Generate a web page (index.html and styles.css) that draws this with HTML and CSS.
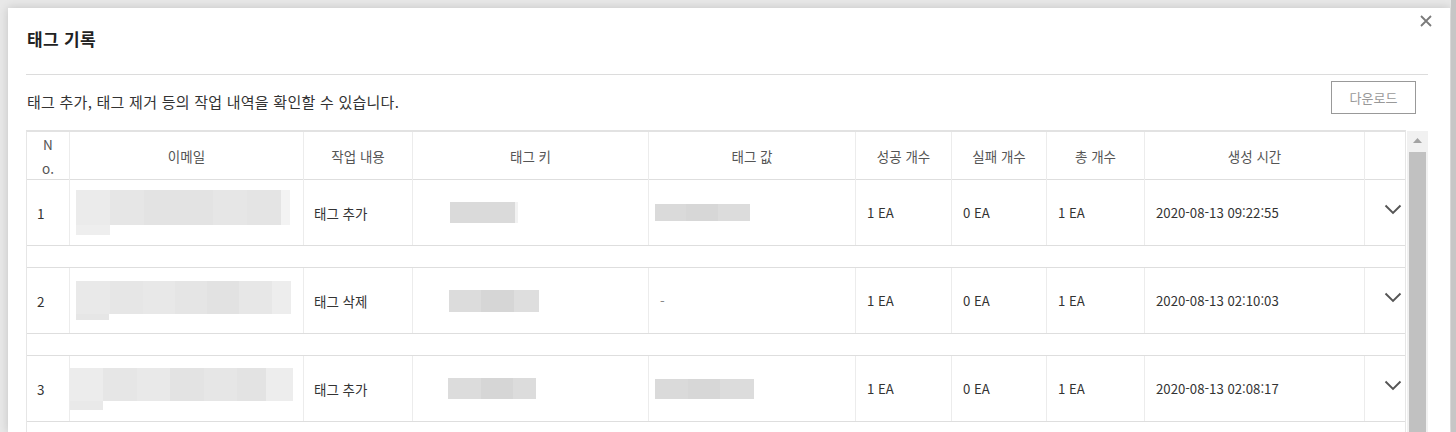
FILE: index.html
```html
<!DOCTYPE html>
<html lang="ko">
<head>
<meta charset="utf-8">
<title>태그 기록</title>
<link rel="stylesheet" href="styles.css">
</head>
<body>
<div class="backdrop">
  <div class="modal">
    <div class="modal-head">
      <h2 class="title">태그 기록</h2>
      <button class="close" aria-label="닫기">
        <svg width="12" height="12" viewBox="0 0 12 12"><path d="M1 1L11 11M11 1L1 11" stroke="#7a7a7a" stroke-width="1.8" fill="none"/></svg>
      </button>
    </div>
    <div class="toolbar">
      <p class="desc">태그 추가, 태그 제거 등의 작업 내역을 확인할 수 있습니다.</p>
      <button class="btn-download">다운로드</button>
    </div>
    <div class="table-area">
      <div class="tbl">
        <div class="row head">
          <div class="cell"><span class="no">No.</span></div>
          <div class="cell">이메일</div>
          <div class="cell">작업 내용</div>
          <div class="cell">태그 키</div>
          <div class="cell">태그 값</div>
          <div class="cell">성공 개수</div>
          <div class="cell">실패 개수</div>
          <div class="cell">총 개수</div>
          <div class="cell">생성 시간</div>
          <div class="cell"></div>
        </div>

        <div class="row body">
          <div class="cell">1</div>
          <div class="cell email e1"><div class="mask-main m1"></div><div class="mask-tail"></div></div>
          <div class="cell">태그 추가</div>
          <div class="cell key k1"><div class="mask-key w1"></div></div>
          <div class="cell val v1"><div class="mask-val"></div></div>
          <div class="cell num">1 EA</div>
          <div class="cell num">0 EA</div>
          <div class="cell num">1 EA</div>
          <div class="cell num">2020-08-13 09:22:55</div>
          <div class="cell toggle"><svg class="chev" width="18" height="11" viewBox="0 0 18 11"><path d="M1.5 1.5L9 9L16.5 1.5" stroke="#555" stroke-width="1.9" fill="none"/></svg></div>
        </div>
        <div class="row spacer"></div>

        <div class="row body">
          <div class="cell">2</div>
          <div class="cell email e2"><div class="mask-main m2"></div><div class="mask-tail t2"></div></div>
          <div class="cell">태그 삭제</div>
          <div class="cell key k2"><div class="mask-key w2"></div></div>
          <div class="cell dash">-</div>
          <div class="cell num">1 EA</div>
          <div class="cell num">0 EA</div>
          <div class="cell num">1 EA</div>
          <div class="cell num">2020-08-13 02:10:03</div>
          <div class="cell toggle"><svg class="chev" width="18" height="11" viewBox="0 0 18 11"><path d="M1.5 1.5L9 9L16.5 1.5" stroke="#555" stroke-width="1.9" fill="none"/></svg></div>
        </div>
        <div class="row spacer"></div>

        <div class="row body">
          <div class="cell">3</div>
          <div class="cell email e3"><div class="mask-main m3"></div><div class="mask-tail t3"></div></div>
          <div class="cell">태그 추가</div>
          <div class="cell key k3"><div class="mask-key w3"></div></div>
          <div class="cell val v3"><div class="mask-val wide"></div></div>
          <div class="cell num">1 EA</div>
          <div class="cell num">0 EA</div>
          <div class="cell num">1 EA</div>
          <div class="cell num">2020-08-13 02:08:17</div>
          <div class="cell toggle"><svg class="chev" width="18" height="11" viewBox="0 0 18 11"><path d="M1.5 1.5L9 9L16.5 1.5" stroke="#555" stroke-width="1.9" fill="none"/></svg></div>
        </div>
        <div class="row spacer"></div>
      </div>
      <div class="vscroll">
        <div class="vscroll-up"><svg width="9" height="5" viewBox="0 0 9 5"><path d="M0 5L4.5 0L9 5Z" fill="#a3a3a3"/></svg></div>
        <div class="vscroll-thumb"></div>
      </div>
    </div>
  </div>
</div>
<div class="page-scroll"></div>
</body>
</html>
```

FILE: styles.css
```css
html, body {
  margin: 0;
  height: 432px;
  overflow: hidden;
}
body {
  display: flex;
  background: #e8e8e8;
  font-family: "Noto Sans CJK KR", "Noto Sans", sans-serif;
  color: #333;
}
.backdrop {
  width: 1451px;
  box-sizing: border-box;
  padding: 8px 1px 0 8px;
  display: flex;
  flex-direction: column;
}
.page-scroll {
  width: 5px;
  background: #c6c6c6;
}
.modal {
  flex: 1;
  background: #fff;
  box-shadow: 0 0 9px rgba(0, 0, 0, 0.16);
  padding: 7px 22px 0 18px;
  overflow: hidden;
}
.modal-head {
  display: flex;
  justify-content: space-between;
  align-items: flex-start;
  height: 59px;
  border-bottom: 1px solid #dcdcdc;
}
.title {
  margin: 12px 0 0 1px;
  font-size: 17px;
  letter-spacing: 0.3px;
  line-height: 24px;
  font-weight: 700;
  color: #222;
}
.close {
  margin: 0 -4px 0 0;
  padding: 0;
  border: 0;
  background: none;
  width: 12px;
  height: 12px;
  display: flex;
}
.toolbar {
  display: flex;
  justify-content: space-between;
  align-items: flex-end;
  margin-top: 6px;
}
.desc {
  margin: 0 0 2px 1px;
  font-size: 15px;
  letter-spacing: 0.25px;
  line-height: 20px;
  color: #333;
}
.btn-download {
  width: 85px;
  height: 33px;
  margin-right: 12px;
  border: 1px solid #999;
  background: #fff;
  color: #999;
  font-family: inherit;
  font-size: 13px;
  padding: 0;
}
.table-area {
  display: flex;
  align-items: stretch;
  margin-top: 16px;
  height: 320px;
}
.tbl {
  width: 1380px;
  box-sizing: border-box;
  border-left: 1px solid #e6e6e6;
  border-right: 1px solid #e6e6e6;
  border-top: 2px solid #e2e2e2;
  align-self: flex-start;
}
.row {
  display: grid;
  grid-template-columns: 43px 234px 109px 236px 207px 96px 95px 98px 220px 40px;
  border-bottom: 1px solid #dedede;
  box-sizing: border-box;
}
.row.head { height: 48px; }
.row.body { height: 66px; }
.row.spacer { height: 22px; }
.cell {
  border-right: 1px solid #ececec;
  display: flex;
  align-items: center;
  font-size: 13.5px;
  color: #333;
  padding-left: 10px;
  box-sizing: border-box;
  min-width: 0;
  white-space: nowrap;
}
.cell.num {
  padding-left: 11px;
  font-size: 13.2px;
  font-feature-settings: "calt" 0;
}
.cell:last-child { border-right: 0; }
.head .cell {
  justify-content: center;
  padding-left: 0;
  color: #555;
  white-space: normal;
}
.no {
  width: 14px;
  word-break: break-all;
  line-height: 24px;
  text-align: center;
}
.email {
  flex-direction: column;
  align-items: flex-start;
  justify-content: center;
}
.e1 { padding-left: 6px; }
.e2 { padding-left: 6px; }
.e3 { padding-left: 0; }
.mask-main {
  width: 214px;
  height: 35px;
  background: linear-gradient(90deg, #ebebeb 0 16%, #e6e6e6 16% 32%, #e3e3e3 32% 64%, #e6e6e6 64% 80%, #e4e4e4 80% 96%, #f3f3f3 96%);
}
.m2 {
  width: 215px;
  height: 33px;
  background: linear-gradient(90deg, #e9e9e9 0 16%, #e6e6e6 16% 31%, #e8e8e8 31% 46%, #e5e5e5 46% 61%, #e2e2e2 61% 76%, #e7e7e7 76% 91%, #ededed 91%);
}
.m3 {
  width: 223px;
  height: 33px;
  background: linear-gradient(90deg, #ececec 0 15%, #e6e6e6 15% 30%, #e9e9e9 30% 45%, #e3e3e3 45% 60%, #e6e6e6 60% 75%, #e3e3e3 75% 88%, #ededed 88%);
}
.mask-tail {
  width: 34px;
  height: 10px;
  background: #eeeeee;
}
.t2 { width: 33px; height: 6px; background: #e6e6e6; }
.t3 { width: 33px; height: 9px; background: #e9e9e9; }
.key { padding-left: 37px; }
.k2 { padding-left: 36px; }
.k3 { padding-left: 35px; }
.mask-key {
  height: 21px;
  background: #dadada;
}
.w1 { width: 65px; box-shadow: 3px 0 0 #f2f2f2; }
.w2 { width: 90px; height: 22px; background: linear-gradient(90deg, #dcdcdc 0 36%, #d6d6d6 36% 72%, #dedede 72%); }
.w3 { width: 88px; height: 21px; background: linear-gradient(90deg, #dcdcdc 0 37%, #d6d6d6 37% 74%, #dcdcdc 74%); }
.val { padding-left: 6px; }
.mask-val {
  width: 95px;
  height: 17px;
  background: linear-gradient(90deg, #dadada 0 33%, #d7d7d7 33% 66%, #dcdcdc 66%);
}
.mask-val.wide { width: 99px; height: 20px; }
.dash { color: #888; padding-left: 11px; }
.toggle { padding-left: 19px; }
.chev { margin-bottom: 7px; }
.vscroll {
  width: 21px;
  margin-left: 1px;
  margin-top: 1px;
  background: #f1f1f1;
  display: flex;
  flex-direction: column;
}
.vscroll-up {
  height: 21px;
  display: flex;
  align-items: center;
  justify-content: center;
  padding-bottom: 2px;
  box-sizing: border-box;
}
.vscroll-thumb {
  flex: 1;
  margin: 0 2px;
  background: #c1c1c1;
}
```
